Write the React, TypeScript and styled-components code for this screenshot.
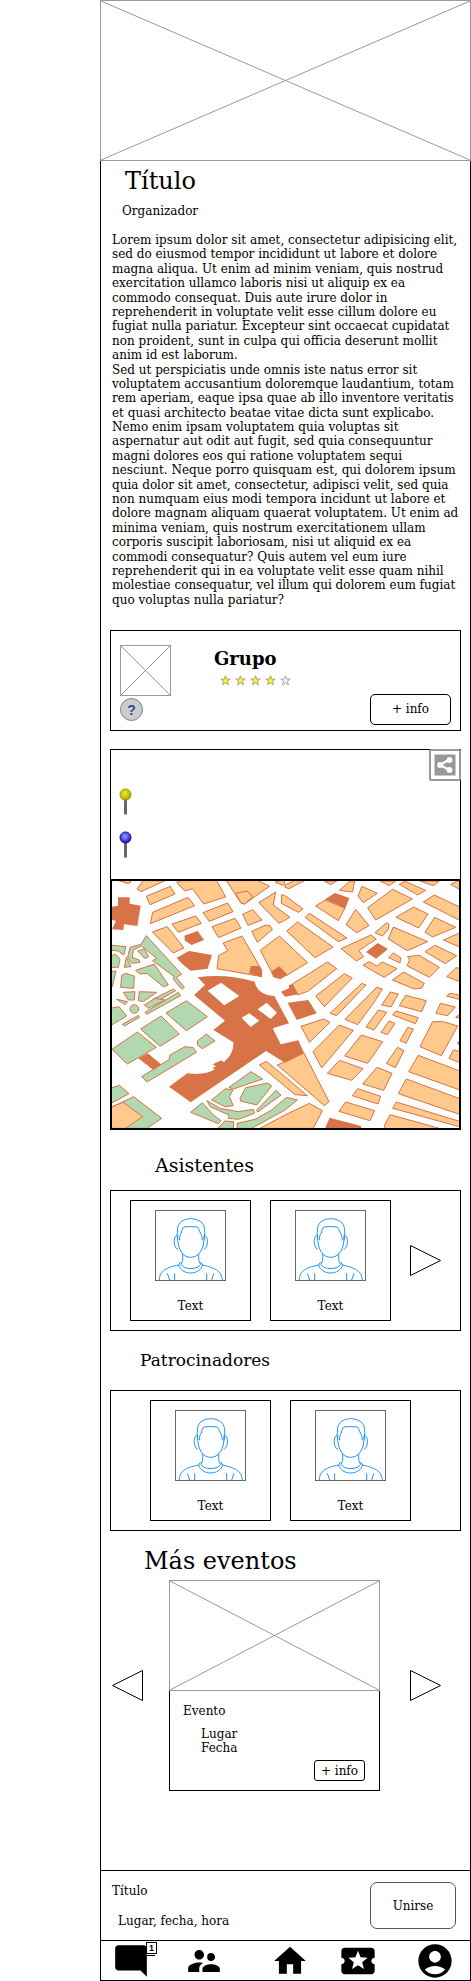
import React from "react";
import styled, { createGlobalStyle } from "styled-components";
import {
  MdModeComment,
  MdSupervisorAccount,
  MdHome,
  MdLocalPlay,
  MdAccountCircle,
} from "react-icons/md";

const GlobalStyle = createGlobalStyle`
  *, *::before, *::after { box-sizing: border-box; }
  body {
    margin: 0;
    background: #fff;
    color: #000;
    font-family: "DejaVu Serif", serif;
    font-size: 12px;
    line-height: 1.2;
  }
  h1, h2, h3, p { margin: 0; padding: 0; font-weight: 400; font-size: 12px; }
  button { font: inherit; color: inherit; }
  svg { display: block; }
`;

const Screen = styled.div`
  margin-left: 100px;
  border: 1px solid #000;
  border-top: 0;
  display: flex;
  flex-direction: column;
`;

const Hero = styled.header`
  margin: 0 -1px;
  height: 161px;
`;

const CrossBox = styled.svg`
  width: 100%;
  height: 100%;
  border: 1px solid #999;
  background: #fff;
`;

const Intro = styled.section`
  padding: 5px 10px 0 11px;
`;

const Title = styled.h1`
  padding-left: 13px;
  font-size: 24px;
  line-height: 30px;
`;

const Organizer = styled.p`
  padding: 8px 0 0 10px;
  line-height: 14px;
`;

const Description = styled.div`
  margin-top: 15px;
  min-height: 375px;
`;

const Panel = styled.section`
  margin: 0 9px;
  border: 1px solid #000;
`;

const GroupPanel = styled(Panel)`
  margin-top: 22px;
  min-height: 101px;
  padding: 14px 9px 5px;
  display: flex;
`;

const GroupMedia = styled.div`
  display: flex;
  flex-direction: column;
  gap: 2px;
  width: 51px;
`;

const Thumb = styled.div`
  height: 51px;
`;

const HelpButton = styled.button`
  width: 23px;
  height: 23px;
  padding: 0;
  border: 1px solid #808080;
  border-radius: 50%;
  background: #ccc;
  color: #2f4b8f;
  font: bold 14px/20px "Liberation Sans", sans-serif;
`;

const GroupInfo = styled.div`
  padding: 2px 0 0 43px;
  flex: 1;
`;

const GroupName = styled.h2`
  font-size: 18px;
  line-height: 24px;
  font-weight: 700;
`;

const Stars = styled.div`
  display: flex;
  gap: 4px;
  padding: 4px 0 0 6px;
`;

const OutlineButton = styled.button<{ $w: number; $h: number; $r: number; $soft?: boolean }>`
  width: ${(p) => p.$w}px;
  height: ${(p) => p.$h}px;
  padding: 0;
  border: 1px solid ${(p) => (p.$soft ? "#555" : "#000")};
  border-radius: ${(p) => p.$r}px;
  background: #fff;
  align-self: flex-end;
`;

const PlacePanel = styled(Panel)`
  margin-top: 18px;
  border-bottom: 0;
  height: 130px;
  display: flex;
  justify-content: space-between;
`;

const Pins = styled.div`
  display: flex;
  flex-direction: column;
  gap: 16px;
  padding: 38px 0 0 8px;
`;

const ShareButton = styled.button`
  width: 32px;
  height: 32px;
  margin: -1px -1px 0 0;
  padding: 3px;
  border: 2px solid #999;
  border-radius: 2px;
  background: #fff;
`;

const MapFrame = styled.figure`
  margin: 0 9px;
  height: 251px;
  border: 2px solid #000;
  & > svg { width: 100%; height: 100%; }
`;

const Heading = styled.h2<{ $size: number; $indent: number; $space: string }>`
  font-size: ${(p) => p.$size}px;
  line-height: ${(p) => p.$size + 6}px;
  margin: ${(p) => p.$space};
  padding-left: ${(p) => p.$indent}px;
`;

const PeoplePanel = styled(Panel)<{ $indent: number }>`
  display: flex;
  align-items: center;
  gap: 19px;
  min-height: 141px;
  padding: 9px 19px 9px ${(p) => p.$indent}px;
`;

const PersonCard = styled.div`
  width: 121px;
  height: 121px;
  border: 1px solid #000;
  padding-top: 9px;
  display: flex;
  flex-direction: column;
  align-items: center;
  gap: 18px;
  line-height: 14px;
`;

const AvatarBox = styled.svg`
  width: 71px;
  height: 71px;
  border: 1px solid #666;
`;

const ArrowButton = styled.button<{ $end?: boolean }>`
  border: 0;
  padding: 0;
  background: none;
  margin-left: ${(p) => (p.$end ? "auto" : "0")};
`;

const Carousel = styled.div`
  display: flex;
  align-items: center;
  gap: 26px;
  padding: 0 29px 0 11px;
`;

const EventCard = styled.article`
  flex: 0 1 211px;
  height: 211px;
`;

const EventImage = styled.div`
  height: 111px;
`;

const EventBody = styled.div`
  height: 100px;
  border: 1px solid #000;
  border-top: 0;
  padding: 13px 14px 9px 13px;
  display: flex;
  flex-direction: column;
  line-height: 14px;
`;

const EventDetails = styled.div`
  padding: 9px 0 0 18px;
  flex: 1;
`;

const JoinBar = styled.section`
  margin-top: 79px;
  height: 70px;
  border-top: 1px solid #000;
  padding: 11px 14px 11px 11px;
  display: flex;
  justify-content: space-between;
  line-height: 14px;
`;

const JoinText = styled.div`
  display: flex;
  flex-direction: column;
  gap: 16px;
  padding-top: 2px;
`;

const JoinDetails = styled.p`
  && { padding-left: 6px; }
`;

const NavBar = styled.nav`
  height: 40px;
  border-top: 1px solid #000;
  padding-left: 11px;
  display: grid;
  grid-template-columns: 73fr 86fr 67fr 77fr 55fr;
  align-items: center;
`;

const NavLink = styled.a`
  position: relative;
  display: block;
  width: 40px;
  color: #000;
`;

const Badge = styled.span`
  position: absolute;
  left: 34px;
  top: 0;
  width: 11px;
  height: 12px;
  border: 1px solid #000;
  background: #fff;
  font: bold 9px/10px "Liberation Sans", sans-serif;
  text-align: center;

  &::after {
    content: "";
    position: absolute;
    left: 0;
    top: 12px;
    width: 8px;
    height: 1px;
    background: #000;
  }
`;

function Placeholder({ label }: { label: string }) {
  return (
    <CrossBox role="img" aria-label={label} preserveAspectRatio="none" viewBox="0 0 100 100">
      <path d="M0 0L100 100M100 0L0 100" stroke="#999" fill="none" vectorEffect="non-scaling-stroke" />
    </CrossBox>
  );
}

function Star({ on }: { on: boolean }) {
  return (
    <svg width="11" height="11" viewBox="0 0 11 11">
      <path
        d="M5.5 0.8L6.7 4.1H10.2L7.4 6.2L8.4 9.8L5.5 7.7L2.6 9.8L3.6 6.2L0.8 4.1H4.3Z"
        fill={on ? "#ff0" : "#fff"}
        stroke="#999"
        strokeWidth="0.9"
      />
    </svg>
  );
}

function Pin({ id, light, mid, dark }: { id: string; light: string; mid: string; dark: string }) {
  return (
    <svg width="14" height="27" viewBox="0 0 14 27">
      <defs>
        <radialGradient id={id} cx="0.45" cy="0.4" r="0.6">
          <stop offset="0" stopColor={light} />
          <stop offset="0.65" stopColor={mid} />
          <stop offset="1" stopColor={dark} />
        </radialGradient>
      </defs>
      <path d="M6.5 10V26.5" stroke="#666" strokeWidth="3" />
      <circle cx="6.5" cy="6.5" r="5.5" fill={`url(#${id})`} stroke={dark} />
    </svg>
  );
}

function Arrow({ left }: { left?: boolean }) {
  return (
    <svg width="31" height="31" viewBox="0 0 31 31">
      <path d={left ? "M30.5 0.5V30.5L0.5 15.5Z" : "M0.5 0.5V30.5L30.5 15.5Z"} fill="#fff" stroke="#000" />
    </svg>
  );
}

function Avatar() {
  return (
    <AvatarBox viewBox="2 2 207 207" role="img" aria-label="Foto">
      <g fill="none" stroke="#1f95f5" strokeWidth="3">
        <path d="M67 88C64 72 66 58 68 48C72 34 88 25 106 25C124 25 142 34 146 48C149 60 149 75 146 90" />
        <path d="M73 90C72 80 74 72 78 68C80 58 82 52 86 50Q106 47 126 50C131 55 132 62 135 68C140 74 141 82 140 90" />
        <path d="M67 75C65 120 85 141 106 141C128 141 148 120 146 75" />
        <path d="M67 76C54 72 52 112 68 117M146 76C159 72 161 112 145 117" />
        <path d="M82 131C83 147 82 156 77 162C84 179 129 179 136 162C130 156 130 147 130 131" />
        <path d="M76 155L70 164C79 196 132 196 142 164L136 155" />
        <path d="M12 209C12 187 25 172 71 164M142 164C186 174 199 186 201 209" />
        <path d="M36 189L43 209M58 189V209M154 189V209M176 189L169 209" />
      </g>
    </AvatarBox>
  );
}

const blocks = [
  "42,32 75,32 78,36 70,41",
  "115,32 96,57 108,65 180,32",
  "124,79 196,49 210,72 135,104",
  "143,127 249,82 269,107 136,161",
  "215,37 228,32 335,32 362,81 296,102 262,56 239,63",
  "364,32 460,32 494,49 418,102 408,99",
  "392,70 426,63 444,80 418,102 408,99",
  "294,128 368,99 384,125 313,154",
  "201,162 272,138 289,160 220,187",
  "321,170 390,145 408,174 341,203",
  "142,186 187,170 237,234 205,249",
  "413,133 443,119 471,150 429,166",
  "440,184 483,165 495,167 502,179 457,217",
  "461,98 512,66 505,105 555,142 522,160",
  "530,74 542,78 594,117 580,127 529,100",
  "510,37 522,32 540,32 536,46",
  "540,45 567,32 598,32 552,56 540,52",
  "354,219 411,198 470,300 470,320 336,296 341,256 368,242",
  "466,241 523,198 608,278 545,316 523,290 500,306",
  "517,585 597,549 672,695 658,707",
  "463,585 484,574 540,620 607,677 570,674",
  "465,775 540,735 613,700 652,722 625,775",
];

const eastBlocks = [
  "163,61 195,33 209,33 203,66",
  "117,33 155,33 137,44",
  "92,108 120,90 180,114 160,152",
  "219,78 231,49 277,70 235,98",
  "248,113 323,58 382,87 272,150",
  "285,33 332,33 313,47",
  "343,43 360,34 422,61 398,75",
  "405,33 463,33 445,47",
  "497,43 530,28 530,62",
  "415,96 448,75 530,114 530,154",
  "333,142 386,111 429,132 401,174",
  "420,187 449,142 512,172 443,201",
  "475,210 530,186 530,234",
  "183,164 212,118 252,167 215,188",
  "270,188 305,158 312,162 309,180 292,198",
  "60,142 74,130 186,204 160,215",
  "5,183 38,156 144,231 90,263",
  "310,207 325,171 428,215 367,242",
  "168,236 258,195 274,207 221,242 236,260 214,273",
  "311,263 325,249 347,263 345,279",
  "420,245 450,226 515,257 481,281",
  "366,287 374,270 368,260 403,256 463,292 433,322",
  "234,286 252,275 275,288 292,276 336,296 298,322",
  "322,330 356,306 418,340 410,354 388,357",
  "485,320 513,293 530,296 530,337",
  "22,342 128,276 155,296 70,363 38,375",
  "92,378 178,311 202,324 118,410",
  "135,430 230,340 243,345 155,437",
  "180,448 275,352 292,357 265,400 218,464",
  "290,405 316,366 340,372 318,411",
  "343,407 362,376 424,392 410,425",
  "485,378 495,370 530,376 530,390",
  "323,435 333,423 400,443 391,461",
  "243,471 280,420 305,427 267,480",
  "288,487 312,453 330,460 308,494",
  "345,512 368,472 385,477 363,520",
  "405,530 443,455 475,455 518,468 469,557",
  "453,430 466,400 511,411 488,437",
  "512,442 530,428 530,445",
  "492,565 505,540 530,545 530,580",
  "48,469 115,447 135,457 73,517",
  "84,545 163,465 205,481 110,594",
  "179,558 229,495 293,515 248,580",
  "304,580 338,532 357,542 331,593",
  "127,610 164,571 234,596 200,631",
  "233,642 276,592 321,610 296,661",
  "202,677 218,656 287,679 279,702",
  "162,724 182,696 269,722 255,752",
  "371,605 400,556 530,605 530,662",
  "340,671 364,627 530,688 530,735",
  "323,715 334,696 530,756 530,772",
  "299,765 315,734 460,774 440,780 300,780",
];

const parks = [
  "15,225 63,230 56,255 40,243 15,240",
  "15,258 32,253 45,268 40,292 15,292",
  "75,232 108,223 124,197 230,313 214,322 238,352 231,358 205,328 208,320 143,272 155,265 110,228 85,240 82,262 103,270 105,277 80,280 68,262",
  "98,243 118,236 131,260 120,266",
  "64,262 78,290 58,292",
  "15,305 33,303 22,350 15,352",
  "50,316 62,310 88,318 86,355 47,352",
  "92,301 148,282 190,345 175,350 126,310 105,312",
  "55,367 90,365 88,390 70,390",
  "103,365 155,367 115,395 100,392",
  "145,387 205,357 212,362 150,398 140,402",
  "120,427 220,367 227,377 125,433",
  "118,405 150,385 180,390 130,415",
  "35,388 68,395 60,404",
  "15,415 42,410 65,438 15,468",
  "52,463 100,436 104,442 58,468",
  "183,429 244,392 307,440 244,482",
  "107,477 168,438 223,492 165,529",
  "21,538 97,486 154,532 67,582",
  "110,620 193,568 195,555 240,530 265,533 274,547 126,636",
  "277,513 304,492 330,513 292,536 278,525",
  "15,655 43,646 72,671 15,702",
  "15,714 86,680 170,745 126,775 60,775",
  "372,652 438,605 473,627 385,657",
  "405,685 422,653 488,639 500,648 455,705 407,693",
  "320,690 362,656 384,660 373,680 385,707 360,710",
  "257,727 292,698 325,735 348,752 340,761",
  "306,692 345,715 400,725 445,718 448,730 400,748 370,745 372,735 315,710",
  "338,775 360,753 386,755 385,775",
  "397,775 396,760 450,748 500,720 545,682 577,690 540,720 440,775",
  "455,720 513,661 528,675 458,726",
];

const landmarks = [
  "39,82 74,82 74,101 107,107 97,168 57,163 55,180 21,178 33,152 15,149 15,111 39,107",
  "238,197 278,183 297,210 260,225 240,212",
  "215,263 252,243 321,255 308,296 257,302 231,281",
  "438,288 462,288 470,300 470,320 432,310",
  "498,306 523,290 548,315 525,328 505,322",
  "100,565 128,550 168,583 145,600",
  "660,88 690,69 733,84 721,115",
  "783,246 818,219 849,237 813,266",
  "528,365 552,355 552,345 562,342 580,373 540,380",
  "548,398 610,390 635,430 575,450",
  "660,775 674,743 768,768 768,775",
  "1056,520 1065,510 1065,530",
];

function CityMap() {
  return (
    <svg viewBox="21 33 1041 741" preserveAspectRatio="xMidYMid slice" role="img" aria-label="Mapa">
      <rect x="0" y="0" width="1100" height="800" fill="#fff" />
      <g stroke="#d77346" strokeWidth="3" fill="#b1d8ae">
        {parks.map((p) => (
          <polygon key={p} points={p} />
        ))}
        <circle cx="88" cy="417" r="13" />
      </g>
      <g stroke="#d77346" strokeWidth="3" fill="#ffc98b">
        <polygon points="15,713 54,697 113,740 62,775 15,775" />
        {blocks.map((p) => (
          <polygon key={p} points={p} />
        ))}
        <g transform="translate(540 0)">
          {eastBlocks.map((p) => (
            <polygon key={p} points={p} />
          ))}
        </g>
      </g>
      <g fill="#d77346">
        {landmarks.map((p) => (
          <polygon key={p} points={p} />
        ))}
        <path
          fillRule="evenodd"
          d="M278 322Q365 310 449 335C455 362 475 375 508 378L552 460L503 475L527 523L580 511L597 549L540 578L483 543L257 697L192 650L247 610Q300 617 330 598L322 595L333 589L323 583L350 571L356 577Q388 550 385 517L325 480L360 452L267 375L300 345ZM308 362L348 338L403 378L358 406ZM410 443L433 430L463 452L437 471ZM458 418L485 398L516 428L497 447Z"
        />
      </g>
    </svg>
  );
}

function Person() {
  return (
    <PersonCard>
      <Avatar />
      <span>Text</span>
    </PersonCard>
  );
}

export default function App() {
  return (
    <>
      <GlobalStyle />
      <Screen>
        <Hero>
          <Placeholder label="Imagen del evento" />
        </Hero>

        <Intro>
          <Title>Título</Title>
          <Organizer>Organizador</Organizer>
          <Description>
            <p>
              Lorem ipsum dolor sit amet, consectetur adipisicing elit, sed do eiusmod tempor incididunt ut
              labore et dolore magna aliqua. Ut enim ad minim veniam, quis nostrud exercitation ullamco laboris
              nisi ut aliquip ex ea commodo consequat. Duis aute irure dolor in reprehenderit in voluptate velit
              esse cillum dolore eu fugiat nulla pariatur. Excepteur sint occaecat cupidatat non proident, sunt
              in culpa qui officia deserunt mollit anim id est laborum.
            </p>
            <p>
              Sed ut perspiciatis unde omnis iste natus error sit voluptatem accusantium doloremque laudantium,
              totam rem aperiam, eaque ipsa quae ab illo inventore veritatis et quasi architecto beatae vitae
              dicta sunt explicabo. Nemo enim ipsam voluptatem quia voluptas sit aspernatur aut odit aut fugit,
              sed quia consequuntur magni dolores eos qui ratione voluptatem sequi nesciunt. Neque porro quisquam
              est, qui dolorem ipsum quia dolor sit amet, consectetur, adipisci velit, sed quia non numquam eius
              modi tempora incidunt ut labore et dolore magnam aliquam quaerat voluptatem. Ut enim ad minima
              veniam, quis nostrum exercitationem ullam corporis suscipit laboriosam, nisi ut aliquid ex ea
              commodi consequatur? Quis autem vel eum iure reprehenderit qui in ea voluptate velit esse quam
              nihil molestiae consequatur, vel illum qui dolorem eum fugiat quo voluptas nulla pariatur?
            </p>
          </Description>
        </Intro>

        <GroupPanel>
          <GroupMedia>
            <Thumb>
              <Placeholder label="Imagen del grupo" />
            </Thumb>
            <HelpButton type="button">?</HelpButton>
          </GroupMedia>
          <GroupInfo>
            <GroupName>Grupo</GroupName>
            <Stars role="img" aria-label="4 de 5 estrellas">
              {[1, 2, 3, 4, 5].map((n) => (
                <Star key={n} on={n <= 4} />
              ))}
            </Stars>
          </GroupInfo>
          <OutlineButton type="button" $w={81} $h={31} $r={5}>
            + info
          </OutlineButton>
        </GroupPanel>

        <PlacePanel>
          <Pins>
            <Pin id="pin-yellow" light="#e8e840" mid="#c4c400" dark="#999900" />
            <Pin id="pin-blue" light="#9a9aff" mid="#4444ee" dark="#111188" />
          </Pins>
          <ShareButton type="button" aria-label="Compartir">
            <svg width="22" height="22" viewBox="0 0 22 22">
              <rect width="21" height="21" x="0.5" y="0.5" fill="#999" />
              <path d="M15.5 5.5L6 11L15.5 16" fill="none" stroke="#fff" strokeWidth="2.4" />
              <g fill="#fff">
                <circle cx="15.5" cy="6" r="2.9" />
                <circle cx="6" cy="11" r="2.9" />
                <circle cx="15.5" cy="16" r="2.9" />
              </g>
            </svg>
          </ShareButton>
        </PlacePanel>
        <MapFrame>
          <CityMap />
        </MapFrame>

        <Heading $size={19} $indent={54} $space="23px 0 12px">
          Asistentes
        </Heading>
        <PeoplePanel $indent={19}>
          <Person />
          <Person />
          <ArrowButton type="button" aria-label="Siguiente">
            <Arrow />
          </ArrowButton>
        </PeoplePanel>

        <Heading $size={17} $indent={39} $space="18px 0 18px">
          Patrocinadores
        </Heading>
        <PeoplePanel $indent={39}>
          <Person />
          <Person />
        </PeoplePanel>

        <Heading $size={24} $indent={43} $space="15px 0 4px">
          Más eventos
        </Heading>
        <Carousel>
          <ArrowButton type="button" aria-label="Anterior">
            <Arrow left />
          </ArrowButton>
          <EventCard>
            <EventImage>
              <Placeholder label="Imagen del evento" />
            </EventImage>
            <EventBody>
              <h3>Evento</h3>
              <EventDetails>
                <p>Lugar</p>
                <p>Fecha</p>
              </EventDetails>
              <OutlineButton type="button" $w={51} $h={21} $r={3}>
                + info
              </OutlineButton>
            </EventBody>
          </EventCard>
          <ArrowButton type="button" aria-label="Siguiente" $end>
            <Arrow />
          </ArrowButton>
        </Carousel>

        <JoinBar>
          <JoinText>
            <p>Título</p>
            <JoinDetails>Lugar, fecha, hora</JoinDetails>
          </JoinText>
          <OutlineButton type="button" $w={86} $h={47} $r={7} $soft>
            Unirse
          </OutlineButton>
        </JoinBar>

        <NavBar>
          <NavLink href="#mensajes" aria-label="Mensajes">
            <MdModeComment size={38} />
            <Badge>1</Badge>
          </NavLink>
          <NavLink href="#personas" aria-label="Personas">
            <MdSupervisorAccount size={38} />
          </NavLink>
          <NavLink href="#inicio" aria-label="Inicio">
            <MdHome size={38} />
          </NavLink>
          <NavLink href="#eventos" aria-label="Eventos">
            <MdLocalPlay size={40} />
          </NavLink>
          <NavLink href="#perfil" aria-label="Perfil">
            <MdAccountCircle size={40} />
          </NavLink>
        </NavBar>
      </Screen>
    </>
  );
}
